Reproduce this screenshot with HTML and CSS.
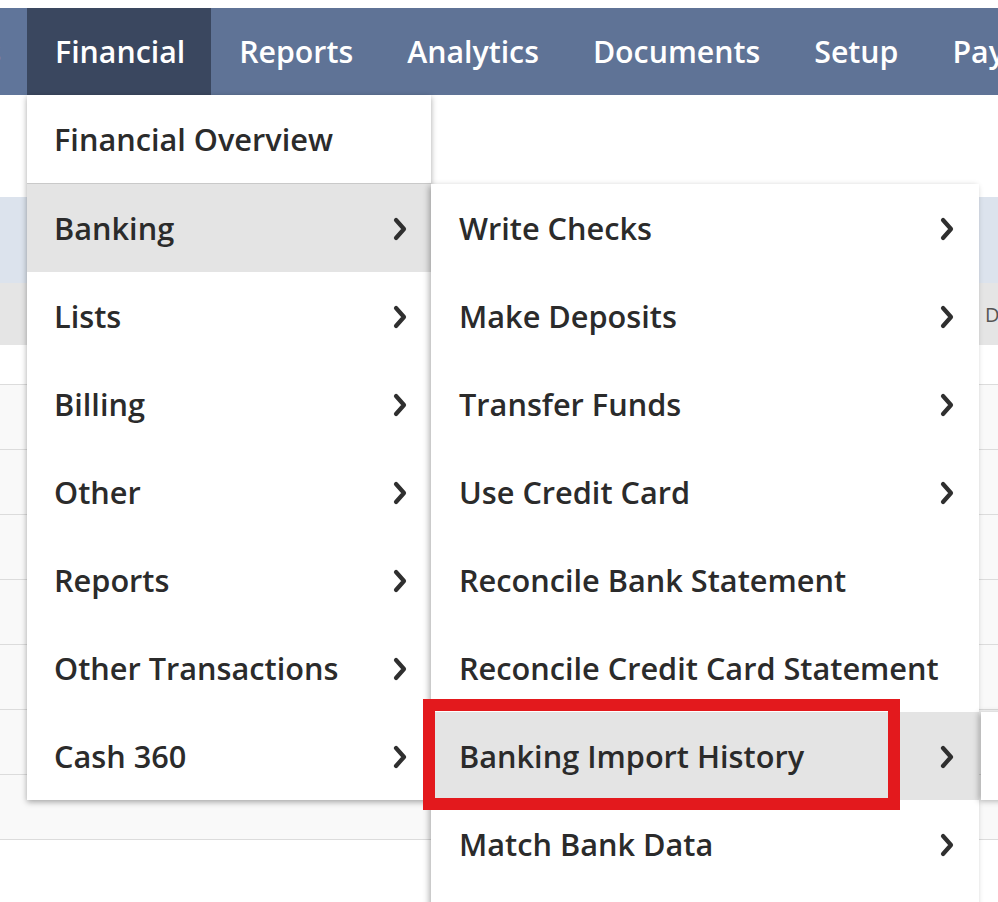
FILE: index.html
```html
<!DOCTYPE html>
<html lang="en">
<head>
<meta charset="utf-8">
<title>Financial menu</title>
<link rel="stylesheet" href="styles.css">
</head>
<body>
<div class="page">
  <nav class="topnav">
    <div class="nav-stub"><span class="nav-stub-text">Sales</span></div>
    <div class="nav-item active">
      <span>Financial</span>
      <div class="menu menu-main">
        <div class="menu-row first"><span>Financial Overview</span></div>
        <div class="menu-row has-sub hover">
          <span>Banking</span>
          <svg class="chev" viewBox="0 0 14 24" width="14" height="24"><polyline points="3,3 11,12 3,21"/></svg>
          <div class="menu menu-sub">
            <div class="menu-row has-sub"><span>Write Checks</span><svg class="chev" viewBox="0 0 14 24" width="14" height="24"><polyline points="3,3 11,12 3,21"/></svg></div>
            <div class="menu-row has-sub"><span>Make Deposits</span><svg class="chev" viewBox="0 0 14 24" width="14" height="24"><polyline points="3,3 11,12 3,21"/></svg></div>
            <div class="menu-row has-sub"><span>Transfer Funds</span><svg class="chev" viewBox="0 0 14 24" width="14" height="24"><polyline points="3,3 11,12 3,21"/></svg></div>
            <div class="menu-row has-sub"><span>Use Credit Card</span><svg class="chev" viewBox="0 0 14 24" width="14" height="24"><polyline points="3,3 11,12 3,21"/></svg></div>
            <div class="menu-row"><span>Reconcile Bank Statement</span></div>
            <div class="menu-row"><span>Reconcile Credit Card Statement</span></div>
            <div class="menu-row has-sub hover">
              <span>Banking Import History</span>
              <svg class="chev" viewBox="0 0 14 24" width="14" height="24"><polyline points="3,3 11,12 3,21"/></svg>
              <div class="menu menu-third"></div>
              <div class="annotation"></div>
            </div>
            <div class="menu-row has-sub"><span>Match Bank Data</span><svg class="chev" viewBox="0 0 14 24" width="14" height="24"><polyline points="3,3 11,12 3,21"/></svg></div>
          </div>
        </div>
        <div class="menu-row has-sub"><span>Lists</span><svg class="chev" viewBox="0 0 14 24" width="14" height="24"><polyline points="3,3 11,12 3,21"/></svg></div>
        <div class="menu-row has-sub"><span>Billing</span><svg class="chev" viewBox="0 0 14 24" width="14" height="24"><polyline points="3,3 11,12 3,21"/></svg></div>
        <div class="menu-row has-sub"><span>Other</span><svg class="chev" viewBox="0 0 14 24" width="14" height="24"><polyline points="3,3 11,12 3,21"/></svg></div>
        <div class="menu-row has-sub"><span>Reports</span><svg class="chev" viewBox="0 0 14 24" width="14" height="24"><polyline points="3,3 11,12 3,21"/></svg></div>
        <div class="menu-row has-sub"><span>Other Transactions</span><svg class="chev" viewBox="0 0 14 24" width="14" height="24"><polyline points="3,3 11,12 3,21"/></svg></div>
        <div class="menu-row has-sub"><span>Cash 360</span><svg class="chev" viewBox="0 0 14 24" width="14" height="24"><polyline points="3,3 11,12 3,21"/></svg></div>
      </div>
    </div>
    <div class="nav-item"><span>Reports</span></div>
    <div class="nav-item"><span>Analytics</span></div>
    <div class="nav-item"><span>Documents</span></div>
    <div class="nav-item"><span>Setup</span></div>
    <div class="nav-item"><span>Payments</span></div>
  </nav>

  <section class="content">
    <div class="blank"></div>
    <div class="band"></div>
    <div class="thead"><span></span><span class="th">Date</span></div>
    <div class="trow short"></div>
    <div class="trow"></div>
    <div class="trow"></div>
    <div class="trow"></div>
    <div class="trow"></div>
    <div class="trow"></div>
    <div class="trow"></div>
    <div class="trow"></div>
  </section>
</div>
</body>
</html>
```

FILE: styles.css
```css
* { box-sizing: border-box; }

html, body {
  margin: 0;
  padding: 0;
  background: #ffffff;
}

body {
  font-family: "Open Sans", "Noto Sans", sans-serif;
  overflow: hidden;
  width: 998px;
  height: 902px;
}

.page {
  padding-top: 8px;
  position: relative;
}

/* ---------- top navigation ---------- */
.topnav {
  display: flex;
  height: 87px;
  background: #5f7396;
  white-space: nowrap;
  position: relative;
  z-index: 5;
}

.nav-stub {
  width: 27px;
  flex: none;
  overflow: hidden;
  display: flex;
  justify-content: flex-end;
  align-items: center;
  background: #60759a;
}

.nav-stub-text {
  color: #ffffff;
  font-size: 30.3px;
  font-weight: 600;
  padding-right: 26px;
}

.nav-item {
  position: relative;
  flex: none;
  display: flex;
  align-items: center;
  padding: 0 26px 0 28px;
  color: #ffffff;
  font-size: 30.3px;
  font-weight: 600;
}

.nav-item.active {
  background: #3a475f;
}

/* ---------- dropdown menus ---------- */
.menu {
  position: absolute;
  background: #ffffff;
  color: #2b2b2b;
  font-size: 30.7px;
  font-weight: 600;
  letter-spacing: 0;
  box-shadow: 0 2px 6px rgba(0, 0, 0, 0.35);
}

.menu-main {
  top: 100%;
  left: 0;
  width: 404px;
}

.menu-sub {
  top: 0;
  left: 100%;
  width: 548px;
  padding-bottom: 30px;
  box-shadow: -2px 2px 6px rgba(0, 0, 0, 0.3);
}

.menu-third {
  top: 0;
  left: calc(100% + 2px);
  width: 220px;
  height: 88px;
  box-shadow: -2px 1px 6px rgba(0, 0, 0, 0.3);
}

.menu-row {
  position: relative;
  height: 88px;
  display: flex;
  align-items: center;
  justify-content: space-between;
  padding: 0 24px 0 27px;
}

.menu-row.first {
  height: 89px;
  border-bottom: 1px solid #c9c9c9;
}

.menu-row.hover {
  background: #e4e4e4;
}

.chev {
  flex: none;
  margin-top: 2px;
}

.chev polyline {
  fill: none;
  stroke: #2f2f2f;
  stroke-width: 4.2;
  stroke-linecap: round;
  stroke-linejoin: round;
}

.menu-sub .menu-row {
  padding-left: 28px;
  padding-right: 25px;
}

/* red highlight drawn over the screenshot */
.annotation {
  position: absolute;
  left: -8px;
  top: -13px;
  width: 477px;
  height: 111px;
  border: 12px solid #e3191d;
  pointer-events: none;
}

/* ---------- page behind the menus ---------- */
.content {
  display: flex;
  flex-direction: column;
}

.blank {
  height: 102px;
}

.band {
  height: 86px;
  background: #dce3ed;
}

.thead {
  height: 62px;
  background: #e5e5e5;
  display: grid;
  grid-template-columns: 985px 1fr;
  align-items: center;
  font-size: 20px;
  color: #555555;
  white-space: nowrap;
}

.trow {
  height: 65px;
  border-bottom: 1px solid #dcdcdc;
  background: #f9f9f9;
}

.trow.short {
  height: 40px;
  background: #ffffff;
}
```
